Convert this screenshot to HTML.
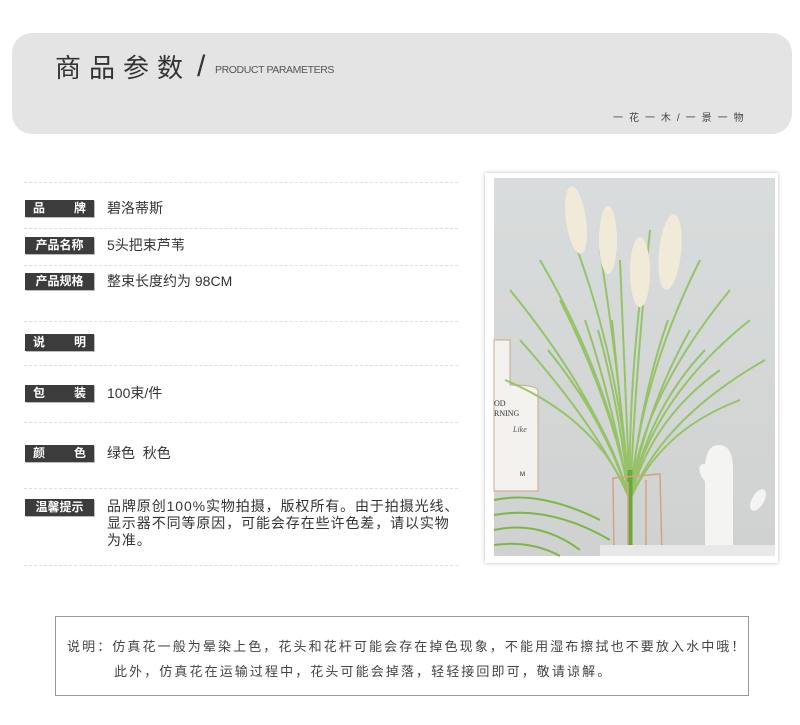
<!DOCTYPE html>
<html><head><meta charset="utf-8"><style>
body{margin:0;width:800px;height:725px;background:#fff;position:relative;overflow:hidden;font-family:"Liberation Sans","Noto Sans CJK SC",sans-serif;color:#333}
.hdr{position:absolute;left:12px;top:33px;width:780px;height:101px;background:#e4e4e4;border-radius:20px}
.t1{position:absolute;left:55px;top:48px;font-size:26px;letter-spacing:8px;color:#333}
.sl{position:absolute;left:197px;top:50px;font-size:30px;color:#333;font-weight:300}
.t2{position:absolute;left:215px;top:64px;font-size:10.5px;color:#555;letter-spacing:-0.4px}
.t3{position:absolute;left:613px;top:109px;font-size:10px;color:#444;letter-spacing:1.6px}
.dl{position:absolute;left:24px;width:434px;border-top:1px dashed #ddd}
.lb{position:absolute;left:25px;width:69px;height:17px;background:#3c3c3c;color:#fff;font-size:12px;font-weight:bold;line-height:17px;box-shadow:1px 1px 0 #bbb;display:flex;justify-content:space-between;padding:0 8px;box-sizing:border-box}
.lb.j{justify-content:center;padding:0}
.tx{position:absolute;left:107px;font-size:14px;color:#333;line-height:17px;white-space:nowrap}
.photo{position:absolute;left:485px;top:173px;width:293px;height:390px;background:#fff;box-shadow:0 0 4px rgba(0,0,0,.25)}
.box{position:absolute;left:55px;top:616px;width:692px;height:78px;border:1px solid #999;font-size:13px;color:#444;letter-spacing:2.1px;white-space:nowrap}
</style></head><body>
<div class="hdr"></div>
<div class="t1">商品参数</div><div class="sl">/</div><div class="t2">PRODUCT PARAMETERS</div>
<div class="t3">一 花 一 木 / 一 景 一 物</div>

<div class="dl" style="top:182px"></div>
<div class="lb" style="top:200px"><span>品</span><span>牌</span></div><div class="tx" style="top:200px">碧洛蒂斯</div>
<div class="dl" style="top:228px"></div>
<div class="lb j" style="top:237px">产品名称</div><div class="tx" style="top:237px">5头把束芦苇</div>
<div class="dl" style="top:265px"></div>
<div class="lb j" style="top:273px">产品规格</div><div class="tx" style="top:273px">整束长度约为 98CM</div>
<div class="dl" style="top:321px"></div>
<div class="lb" style="top:334px"><span>说</span><span>明</span></div>
<div class="dl" style="top:365px"></div>
<div class="lb" style="top:385px"><span>包</span><span>装</span></div><div class="tx" style="top:385px">100束/件</div>
<div class="dl" style="top:422px"></div>
<div class="lb" style="top:445px"><span>颜</span><span>色</span></div><div class="tx" style="top:445px">绿色&nbsp; 秋色</div>
<div class="dl" style="top:488px"></div>
<div class="lb j" style="top:499px">温馨提示</div><div class="tx" style="top:498px;letter-spacing:0.9px">品牌原创100%实物拍摄，版权所有。由于拍摄光线、<br>显示器不同等原因，可能会存在些许色差，请以实物<br>为准。</div>
<div class="dl" style="top:565px"></div>

<div class="photo">
<svg width="293" height="390" viewBox="485 173 293 390" style="position:absolute;left:0;top:0">
<defs><linearGradient id="bg" x1="0" y1="0" x2="0" y2="1"><stop offset="0" stop-color="#d9dcdc"/><stop offset="1" stop-color="#cfd2d1"/></linearGradient></defs>
<rect x="494" y="178" width="281" height="378" fill="url(#bg)"/>
<path d="M494 340 h16 v45 q28 0 28 6 v100 h-44z" fill="#f3f2ef" stroke="#c9a98a"/>
<text x="494" y="406" font-size="8" fill="#333" font-family="Liberation Serif">OD</text>
<text x="494" y="416" font-size="8" fill="#333" font-family="Liberation Serif">RNING</text>
<text x="513" y="432" font-size="8" fill="#555" font-style="italic" font-family="Liberation Serif">Like</text>
<text x="520" y="476" font-size="6" fill="#222">M</text>
<g stroke="#8cc056" stroke-width="2" fill="none" opacity=".85">
<path d="M630 500 Q600 400 510 290"/><path d="M630 500 Q610 380 540 260"/><path d="M630 500 Q620 360 570 230"/><path d="M630 500 Q640 380 700 260"/><path d="M630 500 Q650 400 750 320"/><path d="M630 500 Q660 420 765 360"/><path d="M630 500 Q600 420 505 380"/><path d="M630 500 Q620 380 600 250"/><path d="M630 500 Q635 380 650 230"/><path d="M630 500 Q640 400 730 290"/><path d="M630 500 Q615 410 560 300"/><path d="M630 500 Q645 410 690 330"/><path d="M630 500 Q625 380 620 260"/><path d="M630 500 Q600 430 520 340"/><path d="M630 500 Q660 430 740 400"/>
<path d="M630 500 Q612 400 585 320"/><path d="M630 500 Q618 400 598 330"/><path d="M630 500 Q640 400 668 320"/><path d="M630 500 Q648 410 705 350"/><path d="M630 500 Q605 420 548 350"/><path d="M630 500 Q628 410 640 300"/><path d="M630 500 Q622 420 612 320"/><path d="M630 500 Q650 420 720 370"/><path d="M630 500 Q610 430 570 380"/>
</g>
<g stroke="#7fb548" stroke-width="2" fill="none">
<path d="M494 500 Q540 490 600 520"/><path d="M494 515 Q550 505 610 540"/><path d="M494 530 Q540 520 580 550"/><path d="M494 545 Q530 540 560 556"/>
</g>
<g stroke="#6aa83a" stroke-width="5" fill="none"><path d="M630 555 L630 470"/></g>
<g fill="#f1ead8"><ellipse cx="576" cy="220" rx="10" ry="34" transform="rotate(-8 576 220)"/><ellipse cx="608" cy="240" rx="9" ry="34"/><ellipse cx="640" cy="272" rx="10" ry="35"/><ellipse cx="670" cy="252" rx="11" ry="38" transform="rotate(6 670 252)"/></g>
<g stroke="#d7a184" stroke-width="1.5" fill="none"><path d="M613 478 L660 474 L662 554 L614 554 Z"/><path d="M628 482 L628 554 M646 480 L646 554"/></g>
<path d="M705 470 q0 -25 14 -25 q14 0 14 25 v86 h-28z" fill="#f4f4f2"/>
<ellipse cx="707" cy="474" rx="6" ry="11" fill="#f4f4f2" transform="rotate(-30 707 474)"/>
<ellipse cx="758" cy="500" rx="6" ry="12" fill="#f4f4f2" transform="rotate(30 758 500)"/>
<rect x="600" y="545" width="175" height="11" fill="#e8e8e8"/>
</svg>
</div>

<div class="box">
<div style="position:absolute;left:11px;top:19px">说明：仿真花一般为晕染上色，花头和花杆可能会存在掉色现象，不能用湿布擦拭也不要放入水中哦！</div>
<div style="position:absolute;left:58px;top:44px">此外，仿真花在运输过程中，花头可能会掉落，轻轻接回即可，敬请谅解。</div>
</div>
</body></html>
